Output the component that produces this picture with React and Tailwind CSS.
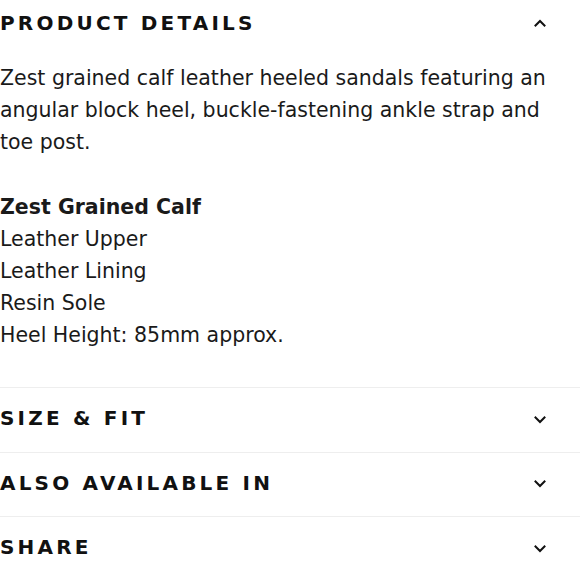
import React from "react";

function Chevron({ up }) {
  return (
    <svg width="12" height="8" viewBox="0 0 12 8" className="shrink-0">
      <path
        d={up ? "M1.5 6.5 L6 2 L10.5 6.5" : "M1.5 1.5 L6 6 L10.5 1.5"}
        fill="none"
        stroke="#111"
        strokeWidth="2"
        strokeLinecap="square"
      />
    </svg>
  );
}

function Row({ title }) {
  return (
    <div className="flex h-[64.5px] items-center justify-between border-t border-[#eeeeee] pr-[34px]">
      <span className="-mt-[3px] text-[20px] font-bold uppercase tracking-[3.2px] text-[#111]">{title}</span>
      <Chevron />
    </div>
  );
}

export default function App() {
  return (
    <div className="w-[580px] h-[580px] overflow-hidden bg-white text-[#1a1a1a]" style={{ fontFamily: "'DejaVu Sans', sans-serif" }}>
      <div className="flex h-[46px] items-center justify-between pr-[34px]">
        <span className="text-[20px] font-bold uppercase tracking-[3.2px] text-[#111]">Product Details</span>
        <Chevron up />
      </div>
      <div className="max-w-[560px] pt-[16px] pb-[36px] text-[20.5px] leading-[32px]">
        <p>Zest grained calf leather heeled sandals featuring an angular block heel, buckle-fastening ankle strap and toe post.</p>
        <p className="mt-[32px] pt-[1px] font-bold">Zest Grained Calf</p>
        <p>Leather Upper</p>
        <p>Leather Lining</p>
        <p>Resin Sole</p>
        <p>Heel Height: 85mm approx.</p>
      </div>
      <Row title="Size & Fit" />
      <Row title="Also Available In" />
      <Row title="Share" />
    </div>
  );
}
